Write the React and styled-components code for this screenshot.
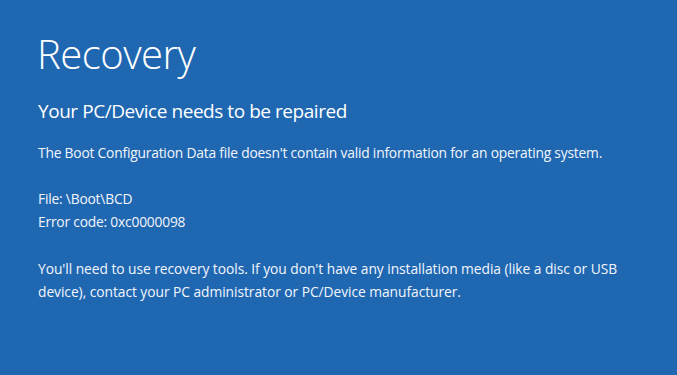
import React from "react";
import styled, { createGlobalStyle } from "styled-components";

const Global = createGlobalStyle`
  html, body {
    margin: 0;
    padding: 0;
    background: #2067b2;
  }
`;

const Screen = styled.div`
  width: 677px;
  height: 375px;
  box-sizing: border-box;
  background: #2067b2;
  color: #fff;
  font-family: "Open Sans", "Noto Sans", sans-serif;
  padding: 28px 0 0 37px;
  overflow: hidden;
`;

const Title = styled.h1`
  margin: 0;
  font-weight: 300;
  font-size: 40px;
  line-height: 52px;
  letter-spacing: -0.5px;
`;

const Subtitle = styled.h2`
  margin: 18px 0 0 1px;
  font-weight: 400;
  font-size: 19px;
  line-height: 26px;
  letter-spacing: -0.45px;
`;

const Para = styled.p`
  margin: ${(p) => p.$gap || 0}px 0 0 1px;
  font-size: 13.8px;
  line-height: 23px;
  letter-spacing: ${(p) => p.$track ?? -0.2}px;
  color: #f2f6fb;
`;

export default function App() {
  return (
    <>
      <Global />
      <Screen>
        <Title>Recovery</Title>
        <Subtitle>Your PC/Device needs to be repaired</Subtitle>
        <Para $gap={17}>
          The Boot Configuration Data file doesn't contain valid information for an operating system.
        </Para>
        <Para $gap={23}>
          File: \Boot\BCD
          <br />
          Error code: 0xc0000098
        </Para>
        <Para $gap={24} $track={-0.05}>
          You'll need to use recovery tools. If you don't have any installation media (like a disc or USB
          <br />
          device), contact your PC administrator or PC/Device manufacturer.
        </Para>
      </Screen>
    </>
  );
}
